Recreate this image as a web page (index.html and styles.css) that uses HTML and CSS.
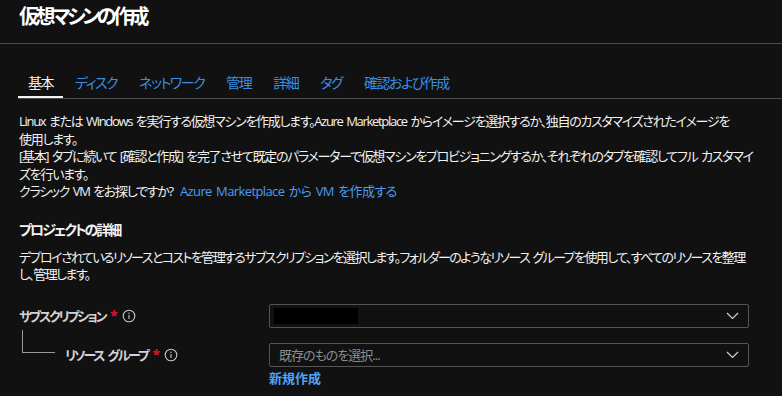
FILE: index.html
```html
<!DOCTYPE html>
<html lang="ja">
<head>
    <meta charset="UTF-8">
    <meta name="viewport" content="width=device-width, initial-scale=1.0">
    <title>仮想マシンの作成</title>
    <link rel="stylesheet" href="styles.css">
</head>
<body>
    <header class="page-title">
        <h1>仮想マシンの作成</h1>
    </header>
    <nav class="tabs">
        <a class="tab active" href="#basics">基本</a>
        <a class="tab" href="#disks">ディスク</a>
        <a class="tab" href="#network">ネットワーク</a>
        <a class="tab" href="#management">管理</a>
        <a class="tab" href="#advanced">詳細</a>
        <a class="tab" href="#tags">タグ</a>
        <a class="tab" href="#review">確認および作成</a>
    </nav>
    <main class="content">
        <p class="intro">
            Linux または Windows を実行する仮想マシンを作成します。Azure Marketplace からイメージを選択するか、独自のカスタマイズされたイメージを<br>使用します。<br>
            [基本] タブに続いて [確認と作成] を完了させて既定のパラメーターで仮想マシンをプロビジョニングするか、それぞれのタブを確認してフル カスタマイ<br>ズを行います。<br>
            クラシック VM をお探しですか?&nbsp; <a class="link" href="#marketplace">Azure Marketplace から VM を作成する</a>
        </p>

        <h2 class="section-title">プロジェクトの詳細</h2>
        <p class="section-desc">デプロイされているリソースとコストを管理するサブスクリプションを選択します。フォルダーのようなリソース グループを使用して、すべてのリソースを整理<br>し、管理します。</p>

        <div class="form-row">
            <div class="label-cell">
                <span class="label">サブスクリプション</span>
                <span class="required">*</span>
                <svg class="info" width="14" height="14" viewBox="0 0 14 14"><circle cx="7" cy="7" r="5.8" fill="none" stroke="#c8c8c8" stroke-width="1.1"/><rect x="6.45" y="6" width="1.1" height="4" fill="#c8c8c8"/><circle cx="7" cy="4.3" r="0.7" fill="#c8c8c8"/></svg>
            </div>
            <div class="select">
                <span class="redacted"></span>
                <svg class="chevron" width="13" height="8" viewBox="0 0 13 8"><polyline points="1,1 6.5,6.5 12,1" fill="none" stroke="#d0d0d0" stroke-width="1.2"/></svg>
            </div>
        </div>

        <div class="form-row sub-row">
            <div class="label-cell">
                <span class="tree-line"></span>
                <span class="label">リソース グループ</span>
                <span class="required">*</span>
                <svg class="info" width="14" height="14" viewBox="0 0 14 14"><circle cx="7" cy="7" r="5.8" fill="none" stroke="#c8c8c8" stroke-width="1.1"/><rect x="6.45" y="6" width="1.1" height="4" fill="#c8c8c8"/><circle cx="7" cy="4.3" r="0.7" fill="#c8c8c8"/></svg>
            </div>
            <div class="field">
                <div class="select">
                    <span class="placeholder">既存のものを選択...</span>
                    <svg class="chevron" width="13" height="8" viewBox="0 0 13 8"><polyline points="1,1 6.5,6.5 12,1" fill="none" stroke="#d0d0d0" stroke-width="1.2"/></svg>
                </div>
                <a class="create-new" href="#new">新規作成</a>
            </div>
        </div>
    </main>
</body>
</html>
```

FILE: styles.css
```css
body {
    margin: 0;
    padding: 0;
    background-color: #111111;
    color: #f2f2f2;
    font-family: "Open Sans", "Noto Sans CJK JP", sans-serif;
    font-feature-settings: "palt" 1;
    font-size: 13px;
    letter-spacing: -1.3px;
    word-spacing: 1.5px;
    height: 396px;
    overflow: hidden;
}
.page-title {
    height: 44px;
    border-bottom: 1px solid #4b4b4b;
    padding: 0 19px;
    box-sizing: border-box;
}
.page-title h1 {
    margin: 0;
    padding-top: 3px;
    font-size: 20px;
    line-height: 28px;
    font-weight: bold;
    letter-spacing: -3.5px;
    color: #ffffff;
}
.tabs {
    display: flex;
    margin: 29px 0 0 18px;
    border-bottom: 1px solid #4b4b4b;
}
.tab {
    padding: 0 10px 3px 10px;
    margin-right: 2px;
    font-size: 14px;
    line-height: 20px;
    letter-spacing: -1.5px;
    color: #3c8fe0;
    text-decoration: none;
    border-bottom: 2px solid transparent;
}
.tab.active {
    color: #f2f2f2;
    border-bottom-color: #f2f2f2;
}
.content {
    padding: 0 20px 0 19px;
}
.intro {
    margin: 14px 0 0 0;
    line-height: 17.5px;
}
.link {
    color: #4a9df0;
    letter-spacing: -0.6px;
    text-decoration: none;
}
.section-title {
    margin: 19px 0 0 0;
    font-size: 14px;
    line-height: 20px;
    font-weight: bold;
    letter-spacing: -2px;
}
.section-desc {
    margin: 9px 0 0 0;
    line-height: 17.5px;
    letter-spacing: -1.6px;
}
.form-row {
    display: grid;
    grid-template-columns: 250px 1fr;
    margin: 20px 13px 0 0;
}
.sub-row {
    margin-top: 15px;
}
.label-cell {
    display: flex;
    align-items: center;
    height: 24px;
    color: #d2d2d2;
    font-weight: bold;
    letter-spacing: -2.2px;
    word-spacing: 3px;
}
.required {
    color: #e81123;
    margin: 0 6px 0 5px;
    font-size: 14px;
}
.info {
    margin-top: 1px;
}
.tree-line {
    align-self: flex-start;
    width: 32px;
    height: 22px;
    margin: -13px 10px 0 3px;
    border-left: 1px solid #9a9a9a;
    border-bottom: 1px solid #9a9a9a;
}
.select {
    display: flex;
    align-items: center;
    height: 24px;
    box-sizing: border-box;
    border: 1px solid #555555;
    border-radius: 2px;
    padding: 0 9px 0 4px;
}
.redacted {
    width: 84px;
    height: 16px;
    background-color: #000000;
}
.placeholder {
    padding-left: 5px;
    color: #8c8c8c;
    letter-spacing: -1px;
}
.chevron {
    margin-left: auto;
}
.create-new {
    display: block;
    margin-top: 2px;
    color: #4fa3f7;
    font-weight: bold;
    letter-spacing: 0;
    text-decoration: none;
    line-height: 18px;
}
```
